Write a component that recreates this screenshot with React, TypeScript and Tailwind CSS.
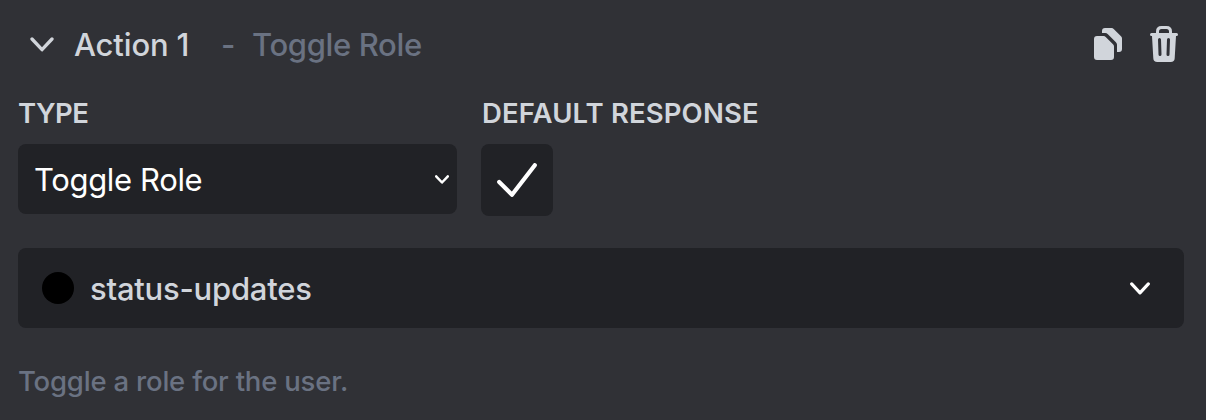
import React from "react";

function Chevron({ className, strokeWidth = 3.3 }: { className: string; strokeWidth?: number }) {
  return (
    <svg viewBox="0 0 24 15" className={className} fill="none" stroke="currentColor" strokeWidth={strokeWidth} strokeLinecap="round" strokeLinejoin="round">
      <path d="M2 2L12 12.7L22 2" />
    </svg>
  );
}

function CopyIcon() {
  return (
    <svg viewBox="0 0 28 32" className="h-8 w-7" fill="currentColor">
      <path d="M3 8H9.6C10.4 8 11.1 8.3 11.7 8.9L19 16.2C19.7 16.9 20 17.6 20 18.4V29Q20 32 17 32H3Q0 32 0 29V11Q0 8 3 8Z" />
      <path d="M11 0H17.6C18.4 0 19.1 .3 19.7 .9L27 8.2C27.7 8.9 28 9.6 28 10.4V21Q28 24 25 24H23V16.8C23 15.7 22.6 14.9 21.9 14.2L13.9 6.2C13.1 5.4 12.2 5 11.2 5H8V3Q8 0 11 0Z" />
    </svg>
  );
}

function TrashIcon() {
  return (
    <svg viewBox="0 0 28 36" className="h-9 w-7">
      <path d="M7.5 8V5.5Q7.5 1.5 11.5 1.5H16.5Q20.5 1.5 20.5 5.5V8" fill="none" stroke="currentColor" strokeWidth="3" />
      <path fillRule="evenodd" fill="currentColor" d="M1.5 7H26.5Q28 7 28 8.5T26.5 10H26L24.7 32.2Q24.5 36 20.7 36H7.3Q3.5 36 3.3 32.2L2 10H1.5Q0 10 0 8.5T1.5 7ZM8 13.5L8.5 28.5Q8.6 30 10 30T11.5 28.5L11 13.5Q10.9 12 9.5 12T8 13.5ZM17 13.5L16.5 28.5Q16.5 30 18 30T19.5 28.5L20 13.5Q20 12 18.5 12T17 13.5Z" />
    </svg>
  );
}

export default function App() {
  return (
    <main className="flex h-[420px] w-full flex-col bg-[#303136] pr-[22px] pl-[18px] font-['Inter',sans-serif] text-[#d1d5db]">
      <header className="flex h-[89px] shrink-0 items-center pr-[6px] pl-3">
        <Chevron className="h-[15px] w-6" />
        <h2 className="ml-5 w-[147px] text-[31px] leading-10 font-[450] tracking-[-0.15px] whitespace-nowrap">Action 1</h2>
        <span className="w-[31px] text-[31px] leading-10 font-[450] text-gray-500">-</span>
        <span className="text-[31px] leading-10 font-[450] tracking-[-0.35px] whitespace-nowrap text-gray-500">Toggle Role</span>
        <div className="ml-auto flex items-center gap-7 pb-0.5">
          <CopyIcon />
          <TrashIcon />
        </div>
      </header>

      <section className="flex h-[159px] shrink-0 gap-6">
        <div className="w-[439px]">
          <div className="flex h-[55px] items-center pb-[5px] text-[27.5px] font-semibold tracking-[-0.5px]">TYPE</div>
          <button className="flex h-[70px] w-full items-center justify-between rounded-lg bg-[#212226] pr-2 pl-4 text-[31px] text-white">
            <span className="pt-0.5 tracking-[-0.35px]">Toggle Role</span>
            <Chevron className="mt-px h-[9px] w-[14px]" strokeWidth={4.2} />
          </button>
        </div>
        <div>
          <div className="flex h-[55px] items-center pb-[5px] pl-px text-[27.5px] font-semibold tracking-[0.12px] whitespace-nowrap">DEFAULT RESPONSE</div>
          <button className="flex size-[72px] items-center justify-center rounded-lg bg-[#212226] text-white">
            <svg viewBox="0 0 40 34" className="h-[34px] w-10" fill="none" stroke="currentColor" strokeWidth="4.2" strokeLinecap="round" strokeLinejoin="round">
              <path d="M2.2 19L15 31.8L37.8 2.2" />
            </svg>
          </button>
        </div>
      </section>

      <button className="flex h-20 w-full shrink-0 items-center rounded-lg bg-[#212226] pr-[34px] pl-6">
        <span className="size-8 rounded-full bg-black" />
        <span className="ml-4 pt-0.5 text-[31px] font-[450] tracking-[-0.24px]">status-updates</span>
        <Chevron className="ml-auto h-[13px] w-[20px] text-white" strokeWidth={3.8} />
      </button>

      <p className="mt-[33px] text-[27.5px] leading-10 font-[450] tracking-[-0.2px] text-gray-500">Toggle a role for the user.</p>
    </main>
  );
}
